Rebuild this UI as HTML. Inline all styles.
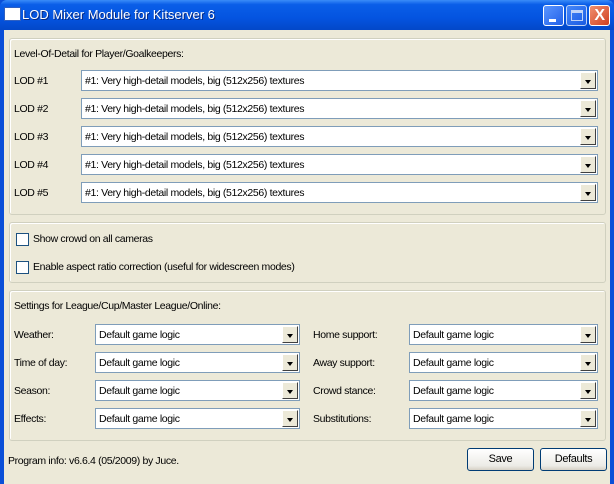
<!DOCTYPE html><html><head><style>
*{box-sizing:border-box;margin:0;padding:0}
body{width:614px;height:484px;overflow:hidden;background:#0a4fd8;font-family:"Liberation Sans",sans-serif;font-size:10.5px;letter-spacing:-0.35px;color:#000;position:relative}
.title{position:absolute;left:0;top:0;width:614px;height:30px;background:linear-gradient(#3a8cf8 0%,#0a5ee8 15%,#0454e0 60%,#0348c8 100%);border-radius:7px 7px 0 0}
.title .t{position:absolute;left:22px;top:7px;color:#fff;font-size:13px;letter-spacing:0;text-shadow:1px 1px #0a2a80}
.ico{position:absolute;left:5px;top:8px;width:15px;height:12px;background:#fff;border-top:3px solid #fff;box-shadow:0 0 0 1px #3060c0}
.btn{position:absolute;top:5px;width:21px;height:21px;border:1px solid #fff;border-radius:3px;background:linear-gradient(135deg,#5a96ff,#2260e8)}
.body{position:absolute;left:4px;top:30px;width:606px;height:454px;background:#ece9d8}
.grp{position:absolute;border:1px solid #d0d0bf;border-radius:3px;box-shadow:inset 1px 1px #fff}
.l{position:absolute;white-space:nowrap}
.cb{position:absolute;height:21px;background:#fff;border:1px solid #7f9db9}
.cb span{position:absolute;left:3px;top:4px;white-space:nowrap}
.cb i{position:absolute;right:1px;top:1px;width:16px;height:17px;background:#ece9d8;border:1px solid;border-color:#fff #404040 #404040 #fff}
.cb i:after{content:"";position:absolute;left:4px;top:7px;border:3.5px solid transparent;border-top:4px solid #000;border-bottom:0}
.chk{position:absolute;width:13px;height:13px;border:1px solid #1c5180;background:#fff}
.pb{position:absolute;height:23px;border:1px solid #003c74;border-radius:3px;background:linear-gradient(#fff,#ecebe6 80%,#d6d0c5);text-align:center;line-height:21px;font-size:11px}
</style></head><body>
<div class="title"><div class="ico"></div><div class="t">LOD Mixer Module for Kitserver 6</div>
<div class="btn" style="left:543px"><div style="position:absolute;left:5px;top:13px;width:7px;height:3px;background:#fff"></div></div>
<div class="btn" style="left:566px;opacity:.75"><div style="position:absolute;left:4px;top:4px;width:12px;height:11px;border:1px solid #fff;border-top-width:3px"></div></div>
<div class="btn" style="left:589px;background:linear-gradient(135deg,#f09070,#d04020)"><div style="position:absolute;left:0;top:0;width:19px;height:19px;color:#fff;font-weight:bold;font-size:16px;text-align:center;line-height:19px">X</div></div>
</div>
<div class="body">
<div class="grp" style="left:5px;top:8px;width:597px;height:177px"></div>
<div class="l" style="left:10px;top:18px">Level-Of-Detail for Player/Goalkeepers:</div>
<div class="l" style="left:10px;top:45px">LOD #1</div><div class="cb" style="left:77px;top:40px;width:517px"><span>#1: Very high-detail models, big (512x256) textures</span><i></i></div>
<div class="l" style="left:10px;top:73px">LOD #2</div><div class="cb" style="left:77px;top:68px;width:517px"><span>#1: Very high-detail models, big (512x256) textures</span><i></i></div>
<div class="l" style="left:10px;top:101px">LOD #3</div><div class="cb" style="left:77px;top:96px;width:517px"><span>#1: Very high-detail models, big (512x256) textures</span><i></i></div>
<div class="l" style="left:10px;top:129px">LOD #4</div><div class="cb" style="left:77px;top:124px;width:517px"><span>#1: Very high-detail models, big (512x256) textures</span><i></i></div>
<div class="l" style="left:10px;top:157px">LOD #5</div><div class="cb" style="left:77px;top:152px;width:517px"><span>#1: Very high-detail models, big (512x256) textures</span><i></i></div>

<div class="grp" style="left:5px;top:192px;width:597px;height:61px"></div>
<div class="chk" style="left:12px;top:203px"></div><div class="l" style="left:29px;top:203px">Show crowd on all cameras</div>
<div class="chk" style="left:12px;top:231px"></div><div class="l" style="left:29px;top:231px">Enable aspect ratio correction (useful for widescreen modes)</div>

<div class="grp" style="left:5px;top:260px;width:597px;height:151px"></div>
<div class="l" style="left:10px;top:270px">Settings for League/Cup/Master League/Online:</div>
<div class="l" style="left:10px;top:299px">Weather:</div><div class="cb" style="left:91px;top:294px;width:205px"><span>Default game logic</span><i></i></div>
<div class="l" style="left:10px;top:327px">Time of day:</div><div class="cb" style="left:91px;top:322px;width:205px"><span>Default game logic</span><i></i></div>
<div class="l" style="left:10px;top:355px">Season:</div><div class="cb" style="left:91px;top:350px;width:205px"><span>Default game logic</span><i></i></div>
<div class="l" style="left:10px;top:383px">Effects:</div><div class="cb" style="left:91px;top:378px;width:205px"><span>Default game logic</span><i></i></div>
<div class="l" style="left:309px;top:299px">Home support:</div><div class="cb" style="left:405px;top:294px;width:189px"><span>Default game logic</span><i></i></div>
<div class="l" style="left:309px;top:327px">Away support:</div><div class="cb" style="left:405px;top:322px;width:189px"><span>Default game logic</span><i></i></div>
<div class="l" style="left:309px;top:355px">Crowd stance:</div><div class="cb" style="left:405px;top:350px;width:189px"><span>Default game logic</span><i></i></div>
<div class="l" style="left:309px;top:383px">Substitutions:</div><div class="cb" style="left:405px;top:378px;width:189px"><span>Default game logic</span><i></i></div>

<div class="l" style="left:4px;top:425px">Program info: v6.6.4 (05/2009) by Juce.</div>
<div class="pb" style="left:463px;top:418px;width:67px">Save</div>
<div class="pb" style="left:536px;top:418px;width:67px">Defaults</div>
</div>
</body></html>
